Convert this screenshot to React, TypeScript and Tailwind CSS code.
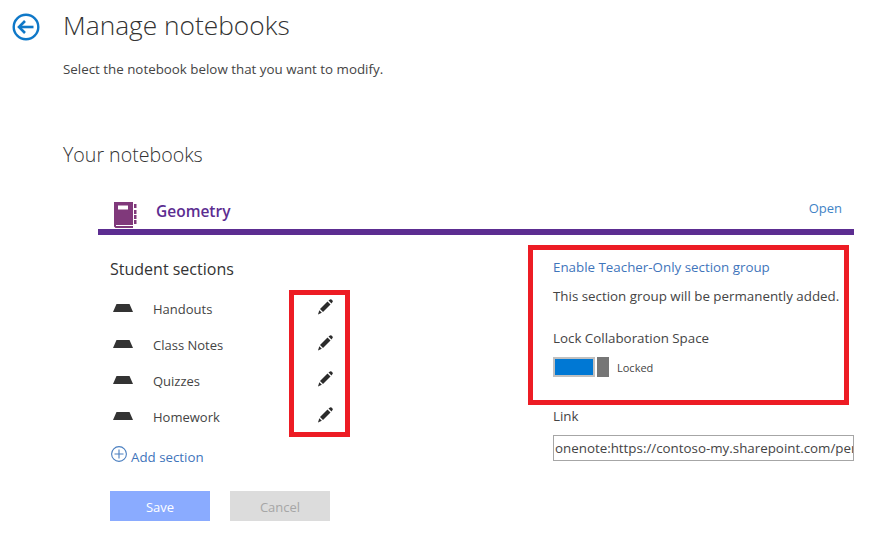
const sections = ["Handouts", "Class Notes", "Quizzes", "Homework"];

const BackIcon = () => (
  <svg width="28" height="28" viewBox="0 0 28 28" fill="none" className="shrink-0">
    <circle cx="14" cy="14" r="12.3" stroke="#0f78c8" strokeWidth="2.4" />
    <path d="M7 14h14.5" stroke="#0f78c8" strokeWidth="2.6" />
    <path d="M13 8l-6 6 6 6" stroke="#0f78c8" strokeWidth="2.6" />
  </svg>
);

const NotebookIcon = () => (
  <svg width="24" height="28" viewBox="0 0 24 28" className="shrink-0">
    <path d="M1 1h19v23H3v1h17v2H2.500L1 25.500z" fill="#80397b" />
    <rect x="5" y="4.500" width="10" height="4" fill="#ffffff" />
    <rect x="21" y="3" width="2.500" height="4" fill="#80397b" />
    <rect x="21" y="9" width="2.500" height="4" fill="#80397b" />
    <rect x="21" y="14" width="2.500" height="4" fill="#80397b" />
    <rect x="21" y="19" width="2.500" height="4" fill="#80397b" />
  </svg>
);

const SectionIcon = () => (
  <svg width="20" height="8" viewBox="0 0 20 8" className="shrink-0 mb-[4px]">
    <path d="M3.500 0h13L20 8H0z" fill="#333333" />
  </svg>
);

const PencilIcon = () => (
  <svg width="16" height="16" viewBox="0 0 16 16">
    <path d="M3 10L10.500 2.500l3 3L6 13z" fill="#2b2b2b" />
    <path d="M11.500 1.500L13 0.500a1.200 1.200 0 0 1 1.500 0l1 1a1.200 1.200 0 0 1 0 1.500l-1 1.500z" fill="#2b2b2b" />
    <path d="M2.300 11.200l2.500 2.500L1 15.500z" fill="#2b2b2b" />
  </svg>
);

const PlusIcon = () => (
  <svg width="16" height="16" viewBox="0 0 16 16" fill="none" className="shrink-0">
    <circle cx="8" cy="8" r="7.400" stroke="#4a7fc0" strokeWidth="1.100" />
    <path d="M8 3.500v9M3.500 8h9" stroke="#4a7fc0" strokeWidth="1.100" />
  </svg>
);

export default function App() {
  return (
    <div className="w-[879px] h-[540px] bg-white overflow-hidden font-['Open_Sans',sans-serif] text-[#444444]">
      <div className="flex items-center pl-[12px] pt-[11px] h-[42px]">
        <BackIcon />
        <h1 className="ml-[23px] -mt-[4px] text-[26.300px] leading-[30px] font-light text-[#333333]">Manage notebooks</h1>
      </div>
      <p className="ml-[63px] mt-[18px] text-[13.350px] leading-[18px]">Select the notebook below that you want to modify.</p>

      <h2 className="ml-[63px] mt-[64px] text-[19.600px] leading-[26px] font-light text-[#333333]">Your notebooks</h2>

      <div className="ml-[98px] w-[756px] mt-[33px]">
        <div className="flex items-center h-[28px] pl-[15px] pr-[12px]">
          <NotebookIcon />
          <span className="ml-[19px] pb-[6px] text-[15.500px] font-semibold text-[#5c2d91]">Geometry</span>
          <a className="ml-auto pb-[12px] text-[13px] text-[#3f83c6]">Open</a>
        </div>
        <div className="h-[6px] bg-[#5c2d91]" />

        <div className="flex">
          <div className="w-[430px] pl-[12px]">
            <div className="mt-[24px] h-[20px] leading-[20px] text-[16px] text-[#333333]">Student sections</div>
            <div className="flex mt-[11px]">
              <ul className="w-[179px] pt-[2px]">
                {sections.map((name) => (
                  <li key={name} className="flex items-center h-[36px] pl-[3px]">
                    <SectionIcon />
                    <span className="ml-[20px] text-[13px]">{name}</span>
                  </li>
                ))}
              </ul>
              <div className="w-[61px] h-[147px] border-[5px] border-[#ed1c24] pl-[23px]">
                <div className="-mt-[6px]">
                  {sections.map((name) => (
                    <div key={name} className="h-[36px] flex items-center">
                      <PencilIcon />
                    </div>
                  ))}
                </div>
              </div>
            </div>
            <div className="flex items-start mt-[9px] ml-[1px] h-[22px]">
              <PlusIcon />
              <a className="ml-[4px] mt-[2px] text-[13.300px] leading-[18px] text-[#3f75bb]">Add section</a>
            </div>
            <div className="flex gap-[20px] mt-[23px]">
              <button className="w-[100px] h-[30px] pt-[3px] bg-[#8aabff] text-white text-[13px]">Save</button>
              <button className="w-[100px] h-[30px] pt-[3px] bg-[#dcdcdc] text-[#a6a6a6] text-[13px]">Cancel</button>
            </div>
          </div>

          <div className="flex-1">
            <div className="mt-[10px] w-[321px] h-[160px] border-[5px] border-[#ed1c24] pl-[20px] pt-[6px]">
              <a className="block text-[13.350px] leading-[22px] text-[#3f75bb]">Enable Teacher-Only section group</a>
              <p className="mt-[8px] text-[13.350px] leading-[20px] whitespace-nowrap">This section group will be permanently added.</p>
              <p className="mt-[22px] text-[13.350px] leading-[20px]">Lock Collaboration Space</p>
              <div className="flex items-center mt-[9px]">
                <div className="w-[42px] h-[20px] border-2 border-[#c0c0c0] bg-[#0078d4]" />
                <div className="ml-[2px] w-[12px] h-[20px] bg-[#767676]" />
                <span className="ml-[8px] pt-[2px] text-[11px]">Locked</span>
              </div>
            </div>
            <div className="ml-[25px]">
              <p className="mt-[1px] text-[13.350px] leading-[20px]">Link</p>
              <div className="mt-[9px] w-[301px] h-[26px] border border-[#a6a6a6] pl-[1px] flex items-center overflow-hidden">
                <span className="text-[13.350px] whitespace-nowrap">onenote:https://contoso-my.sharepoint.com/per</span>
              </div>
            </div>
          </div>
        </div>
      </div>
    </div>
  );
}
